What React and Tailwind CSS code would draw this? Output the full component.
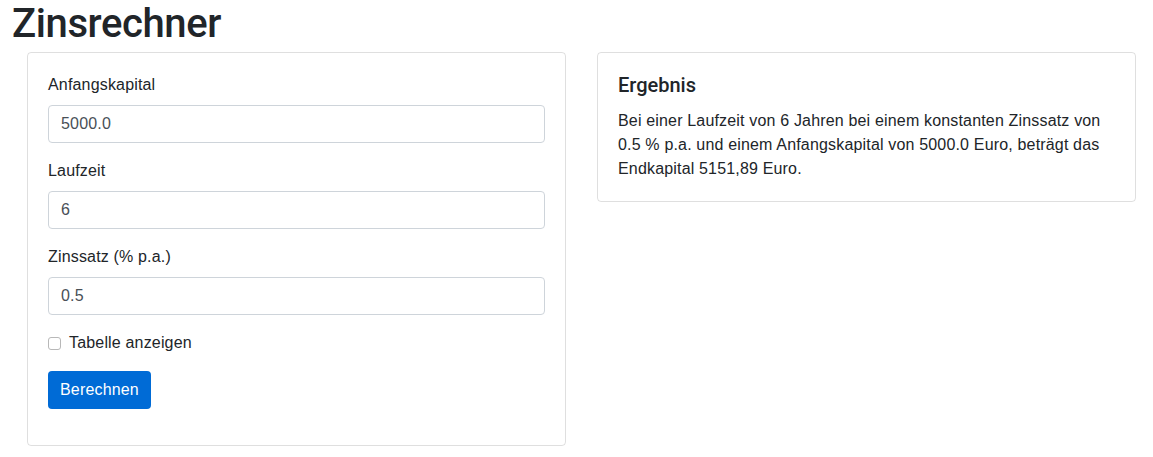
import { useState } from 'react';

function Field({ label, value, onChange }) {
  return (
    <div className="mb-4">
      <label className="block mb-2 leading-6">{label}</label>
      <input
        type="text"
        value={value}
        onChange={(e) => onChange(e.target.value)}
        className="block w-full h-[38px] px-3 border border-[#ced4da] rounded-[4px] text-[#495057] bg-white outline-none tracking-[0.17px]"
      />
    </div>
  );
}

export default function App() {
  const [form, setForm] = useState({ kapital: '5000.0', laufzeit: '6', zins: '0.5' });
  const [tabelle, setTabelle] = useState(false);

  return (
    <div className="min-h-screen bg-white text-[#212529] text-base tracking-[0.17px] font-['Liberation_Sans',Arial,sans-serif]">
      <div className="px-3">
        <h1 className="text-[40px] leading-[48px] font-medium tracking-[-0.4px] mb-1 font-['Roboto',Arial,sans-serif]">
          Zinsrechner
        </h1>
      </div>
      <div className="flex gap-[31px] pl-[27px]">
        <div className="w-[539px] self-start border border-black/[0.125] rounded-[4px] p-5">
          <Field label="Anfangskapital" value={form.kapital} onChange={(v) => setForm({ ...form, kapital: v })} />
          <Field label="Laufzeit" value={form.laufzeit} onChange={(v) => setForm({ ...form, laufzeit: v })} />
          <Field label="Zinssatz (% p.a.)" value={form.zins} onChange={(v) => setForm({ ...form, zins: v })} />
          <div className="mb-4 flex items-center h-6">
            <input
              type="checkbox"
              checked={tabelle}
              onChange={(e) => setTabelle(e.target.checked)}
              className="w-[13px] h-[13px] appearance-none border border-[#b8b8b8] rounded-[3px] bg-white checked:bg-[#006bd6]"
            />
            <label className="ml-2 leading-6">Tabelle anzeigen</label>
          </div>
          <button className="mb-4 h-[38px] px-3 bg-[#006bd6] text-white rounded-[4px] leading-6">
            Berechnen
          </button>
        </div>
        <div className="w-[539px] self-start border border-black/[0.125] rounded-[4px] p-5">
          <h5 className="text-xl leading-6 font-medium tracking-normal mb-3 font-['Roboto',Arial,sans-serif]">Ergebnis</h5>
          <p className="leading-6">
            Bei einer Laufzeit von 6 Jahren bei einem konstanten Zinssatz von 0.5 % p.a. und einem Anfangskapital von
            5000.0 Euro, beträgt das Endkapital 5151,89 Euro.
          </p>
        </div>
      </div>
    </div>
  );
}
